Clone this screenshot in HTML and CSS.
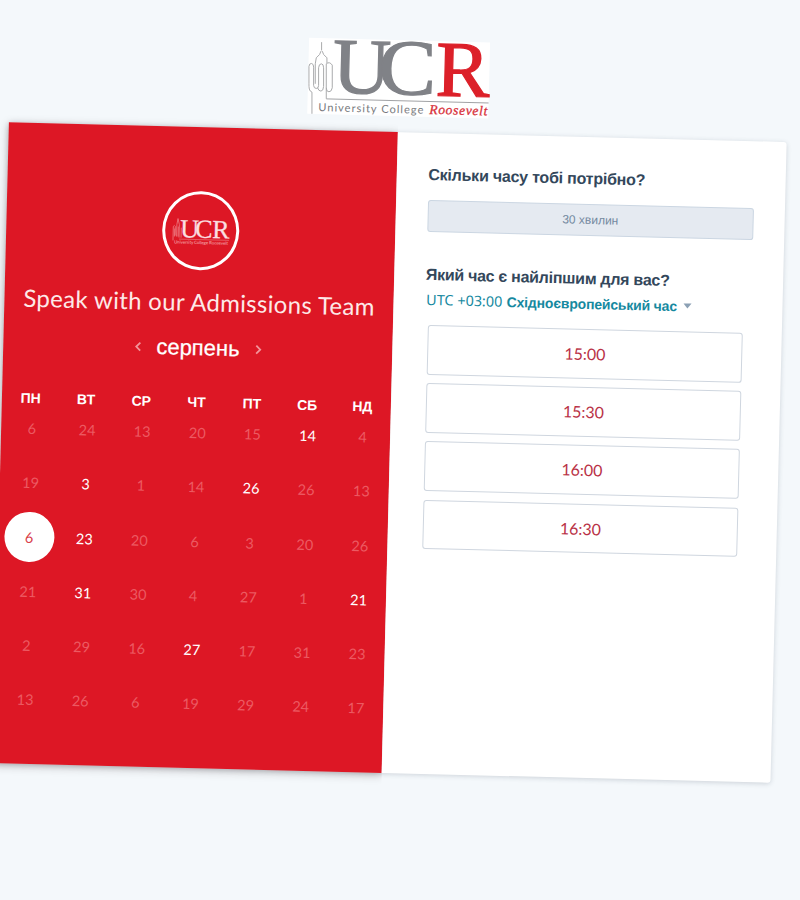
FILE: index.html
```
<!DOCTYPE html>
<html lang="uk">
<head>
<meta charset="utf-8">
<title>UCR</title>
<link rel="stylesheet" href="styles.css">
</head>
<body>
<div class="page">
  <svg class="logo" viewBox="0 0 181 76">
    <g class="tower" transform="matrix(.333 -.0084 .0084 .333 -9.7 -7.1)">
      <path d="M37 250V185C28 182 28 172 28 160V108Q29 98 36 99Q42 100 42 110V165Q43 174 50 174T57 165V112Q58 100 65 100T72 112V168Q71 182 64 182T54 172M66 35V60M64 62Q63 72 50 82L47 100V160M68 62Q69 72 82 82V98M80 205V100Q90 92 98 104V172Q96 184 88 184T80 172"/>
    </g>
    <text class="big gray" x="24.500" y="54" textLength="58" lengthAdjust="spacingAndGlyphs">U</text>
    <text class="big gray" x="70" y="54" textLength="58" lengthAdjust="spacingAndGlyphs">C</text>
    <text class="big red" x="127.500" y="54.500" textLength="54" lengthAdjust="spacingAndGlyphs">R</text>
    <path class="rule" d="M18.7 60.6H181"/>
    <text class="small" x="11" y="73" textLength="105">University College</text>
    <text class="surname" x="122" y="73" textLength="58">Roosevelt</text>
  </svg>

  <main class="card">
    <section class="calendar">
      <div class="avatar">
        <svg class="mini" viewBox="0 0 60 28">
          <path class="mini-tower" d="M2 24V10Q3 8 4 10V19M5.500 20V8L6.500 2L8 8V21M10 21V11M3.500 12V20M7 10V20"/>
          <text class="mini-big" x="9" y="20.500">U</text>
          <text class="mini-big" x="24" y="20.500">C</text>
          <text class="mini-big" x="41" y="20.500">R</text>
          <path class="mini-rule" d="M8 22.500H58"/>
          <text class="mini-small" x="3" y="27" textLength="54">University College Roosevelt</text>
        </svg>
      </div>
      <h1>Speak with our Admissions Team</h1>
      <div class="month">
        <svg class="chev" viewBox="0 0 8 10"><path d="M6 1L2 5L6 9"/></svg>
        <span>серпень</span>
        <svg class="chev" viewBox="0 0 8 10"><path d="M2 1L6 5L2 9"/></svg>
      </div>
      <div class="week"><span>ПН</span><span>ВТ</span><span>СР</span><span>ЧТ</span><span>ПТ</span><span>СБ</span><span>НД</span></div>
      <div class="days">
        <span>6</span><span>24</span><span>13</span><span>20</span><span>15</span><span class="on">14</span><span>4</span>
        <span>19</span><span class="on">3</span><span>1</span><span>14</span><span class="on">26</span><span>26</span><span>13</span>
        <span class="picked"><b>6</b></span><span class="on">23</span><span>20</span><span>6</span><span>3</span><span>20</span><span>26</span>
        <span>21</span><span class="on">31</span><span>30</span><span>4</span><span>27</span><span>1</span><span class="on">21</span>
        <span>2</span><span>29</span><span>16</span><span class="on">27</span><span>17</span><span>31</span><span>23</span>
        <span>13</span><span>26</span><span>6</span><span>19</span><span>29</span><span>24</span><span>17</span>
      </div>
    </section>
    <section class="times">
      <h2>Скільки часу тобі потрібно?</h2>
      <div class="duration">30 хвилин</div>
      <h2 class="second">Який час є найліпшим для вас?</h2>
      <div class="zone"><span class="utc">UTC +03:00</span><b>Східноєвропейський час</b><i class="caret"></i></div>
      <div class="slots">
        <div>15:00</div><div>15:30</div><div>16:00</div><div>16:30</div>
      </div>
    </section>
  </main>
</div>
</body>
</html>
```
FILE: styles.css
```
* { box-sizing: border-box; }
html { height: 100%; overflow: hidden; background: #f4f8fb; }
body { margin: 0; height: 900px; overflow: hidden; font-family: "Liberation Sans", Arial, sans-serif; }
.page { width: 802.6px; padding: 29.5px 0 0 12.2px; transform: rotate(1.45deg); transform-origin: 0 0; }

svg { overflow: visible; }
.logo { display: block; width: 181px; height: 76px; margin-left: 298.3px; background: #fff; }
.tower path { fill: none; stroke: #a9aaac; stroke-width: 3; }
.big { font: 79px "Liberation Serif", serif; stroke-width: 1.2; }
.gray { fill: #808287; stroke: #808287; }
.red { fill: #dc2029; stroke: #dc2029; }
.rule { stroke: #98999c; stroke-width: .9; }
.small { font: 11px Lato, sans-serif; fill: #77797d; }
.surname { font: italic 13.5px "Liberation Serif", serif; fill: #d8303a; stroke: #d8303a; stroke-width: .3; }

.card { display: flex; width: 778.3px; height: 641.2px; margin-top: 16.4px; background: #fff; border-radius: 3px; box-shadow: 0 1px 5px rgba(45, 62, 80, .2); }
.calendar { width: 389px; flex: none; padding: 64.5px 1px 0; background: #dd1725; color: #fff; box-shadow: 0 2px 10px rgba(45, 30, 30, .28); clip-path: inset(-20px 0 -20px -20px); }
.avatar { display: flex; align-items: center; justify-content: center; width: 77px; height: 79px; margin: 0 auto; border: 3px solid #fff; border-radius: 50%; }
.mini { width: 60px; height: 28px; }
.mini-tower { fill: none; stroke: #ee7f86; stroke-width: .8; }
.mini-big { font: 26px "Liberation Serif", serif; fill: #fbdfe0; stroke: #fbdfe0; stroke-width: .3; }
.mini-rule { stroke: #ee7f86; stroke-width: .6; }
.mini-small { font: bold 4.5px Lato, sans-serif; fill: #f08d92; }
h1 { margin: 14px 0 0; font: 24px/36px Lato, sans-serif; letter-spacing: .32px; text-align: center; white-space: nowrap; color: #fde9e8; }
.month { display: flex; align-items: center; justify-content: center; height: 36px; margin-top: 9.5px; font-size: 22px; }
.month span { width: 112px; text-align: center; -webkit-text-stroke: .25px #fff; }
.chev { width: 8px; height: 10px; fill: none; stroke: #f2949a; stroke-width: 1.8; }
.week, .days { display: grid; grid-template-columns: repeat(7, 1fr); text-align: center; }
.week { margin-top: 26px; font-size: 14px; font-weight: bold; line-height: 20px; }
.days { grid-auto-rows: 54.25px; margin: -6.4px -1px 0 2px; font: 14.5px Lato, sans-serif; color: #ec5a62; place-items: center; }
.days .on { color: #fff; }
.picked b { display: flex; align-items: center; justify-content: center; width: 50px; height: 50.5px; border-radius: 50%; background: #fff; color: #d9404a; font-weight: normal; }

.times { padding: 31.7px 0 0 31.5px; color: #33475b; }
h2 { margin: 0; font-size: 16px; line-height: 20px; letter-spacing: -.23px; white-space: nowrap; }
.duration { width: 326px; height: 32px; margin-top: 15.8px; border: 1px solid #cbd6e2; border-radius: 3px; background: #e5eaf1; color: #7489a0; font-size: 12px; line-height: 31px; text-align: center; }
.second { margin-top: 32.7px; letter-spacing: -.28px; }
.zone { display: flex; align-items: center; height: 20px; margin: 4.8px 0 0 1px; color: #16899f; font-size: 14px; white-space: nowrap; }
.zone b { letter-spacing: -.18px; }
.utc { width: 80.5px; font: 14.4px "Noto Sans", sans-serif; }
.caret { margin-left: 7px; border: 4px solid transparent; border-top: 5px solid #8ba0b4; border-bottom: 0; }
.slots { display: grid; gap: 8.6px; margin: 15px 0 0 3.7px; }
.slots div { width: 314.5px; height: 49.7px; border: 1px solid #cfd6df; border-radius: 3px; font: 16px/48px Lato, sans-serif; text-align: center; color: #b93146; }
```
